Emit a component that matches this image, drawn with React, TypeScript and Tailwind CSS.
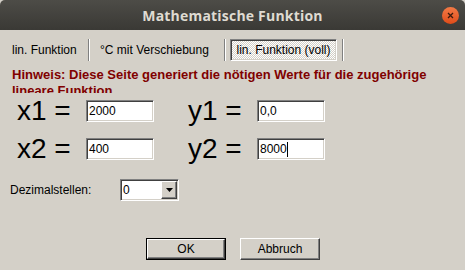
import React from "react";

const sunken =
  "border border-t-[#808080] border-l-[#808080] border-b-white border-r-white shadow-[inset_1px_1px_0_#404040,inset_-1px_-1px_0_#d4d0c8]";
const raised =
  "border border-t-white border-l-white border-b-[#404040] border-r-[#404040] shadow-[inset_-1px_-1px_0_#808080]";

function Field({ value, caret }: { value: string; caret?: boolean }) {
  return (
    <div className={`w-[68px] h-[22px] bg-white flex items-center pl-[2px] text-[12px] text-black ${sunken}`}>
      <span>{value}</span>
      {caret && <span className="w-px h-[15px] bg-black" />}
    </div>
  );
}

function Row({ a, av, b, bv, caret }: { a: string; av: string; b: string; bv: string; caret?: boolean }) {
  return (
    <div className="flex items-center h-[28px] pl-[17px]">
      <span className="w-[69px] text-[28px] leading-none text-black">{a}</span>
      <Field value={av} />
      <span className="w-[69px] ml-[34px] text-[28px] leading-none text-black">{b}</span>
      <Field value={bv} caret={caret} />
    </div>
  );
}

function Sep() {
  return <div className="w-[2px] h-[22px] border-l border-l-[#808080] border-r border-r-white" />;
}

export default function App() {
  return (
    <div className="w-[465px] h-[270px] overflow-hidden bg-[#d4d0c8] flex flex-col font-['Liberation_Sans',Arial,sans-serif]">
      {/* title bar */}
      <div className="relative h-[30px] shrink-0 rounded-t-[5px] bg-gradient-to-b from-[#4d4c47] to-[#3a3935] flex items-center justify-center">
        <span className="font-['Open_Sans',sans-serif] font-bold text-[14px] text-[#dfdbd2] tracking-[0.2px]">
          Mathematische Funktion
        </span>
        <div className="absolute left-[442px] top-[7px] w-[17px] h-[17px] rounded-full bg-gradient-to-b from-[#f27a45] to-[#df4b17] flex items-center justify-center">
          <svg width="7" height="7" viewBox="0 0 7 7">
            <path d="M1 1L6 6M6 1L1 6" stroke="#3b1a0d" strokeWidth="1.3" />
          </svg>
        </div>
      </div>

      {/* tabs */}
      <div className="flex items-center mt-[9px] h-[22px] shrink-0 text-[12px] text-black">
        <span className="ml-[12px] w-[76px]">lin. Funktion</span>
        <Sep />
        <span className="ml-[10px] w-[124px]">°C mit Verschiebung</span>
        <Sep />
        <div
          className={`ml-[4px] w-[107px] h-[22px] flex items-center justify-center bg-[repeating-conic-gradient(#ffffff_0_25%,#d4d0c8_0_50%)] bg-[length:2px_2px] ${sunken}`}
        >
          lin. Funktion (voll)
        </div>
        <div className="ml-[5px]"><Sep /></div>
      </div>

      {/* hint */}
      <div className="h-[32px] shrink-0 overflow-hidden pt-[6px] pl-[12px] pr-[20px]">
        <p className="text-[13px] leading-[16px] font-bold text-[#800000]">
          Hinweis: Diese Seite generiert die nötigen Werte für die zugehörige lineare Funktion
        </p>
      </div>

      {/* values */}
      <div className="flex flex-col gap-[10px] pt-[4px]">
        <Row a="x1 =" av="2000" b="y1 =" bv="0,0" />
        <Row a="x2 =" av="400" b="y2 =" bv="8000" caret />
      </div>

      {/* decimals */}
      <div className="flex items-center mt-[16px] pl-[10px] text-[12px] text-black">
        <span className="w-[110px]">Dezimalstellen:</span>
        <div className={`w-[59px] h-[22px] bg-white flex items-center ${sunken}`}>
          <span className="flex-1 pl-[2px]">0</span>
          <div className={`w-[16px] h-[18px] mr-[1px] bg-[#d4d0c8] flex items-center justify-center ${raised}`}>
            <svg width="7" height="4" viewBox="0 0 7 4">
              <path d="M0 0H7L3.5 4Z" fill="#000" />
            </svg>
          </div>
        </div>
      </div>

      {/* buttons */}
      <div className="flex mt-[37px] pl-[146px] gap-[14px] text-[12px] text-black">
        <div className="w-[80px] h-[22px] border border-black">
          <div className={`w-full h-full flex items-center justify-center ${raised}`}>OK</div>
        </div>
        <div className={`w-[80px] h-[22px] flex items-center justify-center ${raised}`}>Abbruch</div>
      </div>
    </div>
  );
}
